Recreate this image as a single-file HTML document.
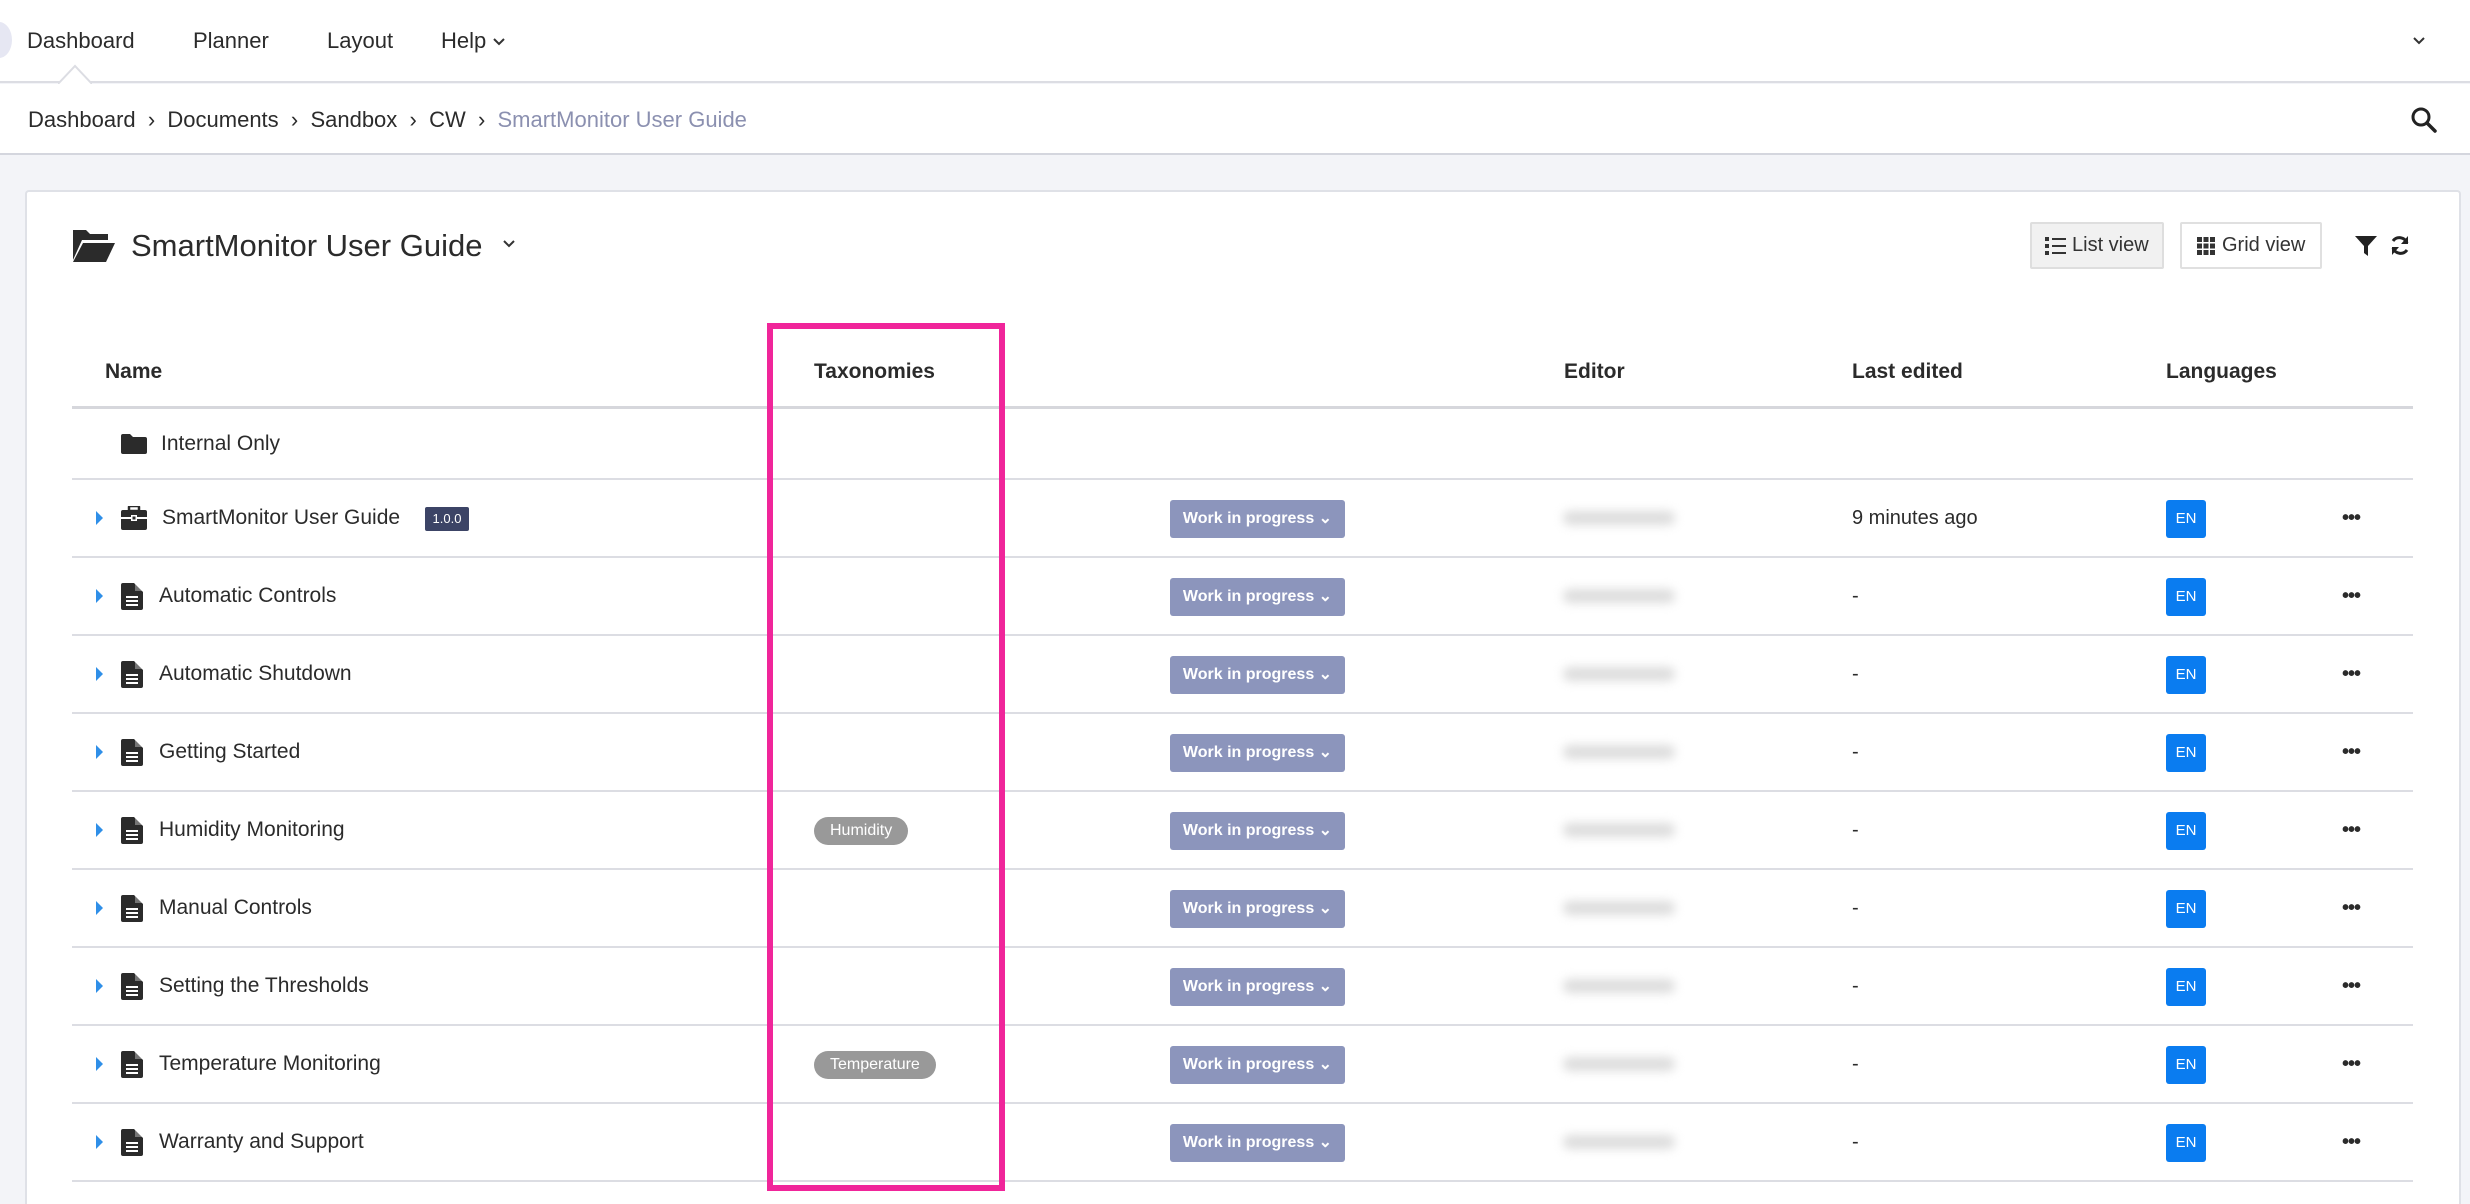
<!DOCTYPE html>
<html style="width:2470px;height:1204px;overflow:hidden"><head><meta charset="utf-8"><style>
*{box-sizing:border-box;margin:0;padding:0}
body{width:2470px;height:1204px;overflow:hidden;background:#f3f4f8;font-family:"Liberation Sans",sans-serif;color:#2b2b2b;position:relative}
.a{position:absolute}
.top{left:0;top:0;width:2470px;height:83px;background:#fff;border-bottom:2px solid #dcdde3}
.crumb{left:0;top:84px;width:2470px;height:71px;background:#fff;border-bottom:2px solid #d4d6de}
.nav{top:28px;font-size:22px;color:#2b2b2b}
.card{left:25px;top:190px;width:2436px;height:1014px;background:#fff;border:2px solid #dfe1e7;border-bottom:none;border-radius:4px 4px 0 0}
.th{top:360px;font-size:21px;font-weight:bold;color:#2b2b2b}
.line{left:72px;width:2341px;height:2px;background:#dcdde3}
.name{font-size:21px;color:#2b2b2b}
.wip{left:1170px;width:175px;height:38px;background:#8c95bc;border-radius:3px;color:#fff;font-size:16px;font-weight:bold;line-height:38px;text-align:center}
.ed{left:1563px;width:112px;height:14px;background:#dcdcdc;border-radius:7px;filter:blur(5px)}
.en{left:2166px;width:40px;height:38px;background:#0a7cf0;border-radius:3px;color:#fff;font-size:15px;line-height:38px;text-align:center}
.dots{left:2342px;font-size:20px;font-weight:bold;letter-spacing:-1px}
.tri{left:96px;width:0;height:0;border-left:7px solid #2f8fe8;border-top:7px solid transparent;border-bottom:7px solid transparent}
.pill{left:814px;height:28px;background:#999;border-radius:14px;color:#fff;font-size:16px;line-height:28px;padding:0 16px}
.le{left:1852px;font-size:20px}
</style></head><body>
<div class="a top"></div>
<div class="a" style="left:-14px;top:22px;width:26px;height:36px;border-radius:50%;background:#e6e7f3"></div>
<div class="a nav" style="left:27px">Dashboard</div>
<div class="a nav" style="left:193px">Planner</div>
<div class="a nav" style="left:327px">Layout</div>
<div class="a nav" style="left:441px">Help</div>
<svg class="a" style="left:493px;top:38px" width="12" height="8"><path d="M1 1 L6 6 L11 1" fill="none" stroke="#333" stroke-width="2"/></svg>
<svg class="a" style="left:58px;top:64px" width="34" height="21"><path d="M0 20 L17 2 L34 20" fill="#fff" stroke="#dcdde3" stroke-width="2"/></svg>
<svg class="a" style="left:2412px;top:36px" width="14" height="10"><path d="M2 2 L7 7 L12 2" fill="none" stroke="#333" stroke-width="2"/></svg>
<div class="a crumb"></div>
<div class="a" style="left:28px;top:107px;font-size:22px;color:#2b2b2b">Dashboard &nbsp;›&nbsp; Documents &nbsp;›&nbsp; Sandbox &nbsp;›&nbsp; CW &nbsp;›&nbsp; <span style="color:#8b90b0">SmartMonitor User Guide</span></div>
<svg class="a" style="left:2410px;top:106px" width="28" height="28"><circle cx="11" cy="11" r="8" fill="none" stroke="#222" stroke-width="3"/><path d="M17 17 L25 25" stroke="#222" stroke-width="3.5" stroke-linecap="round"/></svg>
<div class="a card"></div>
<svg class="a" style="left:72px;top:228px" width="44" height="36"><path d="M1 2 H14 L18 6 H36 V12 H10 L1 32 Z" fill="#2b2b2b"/><path d="M11 15 H43 L34 34 H1 Z" fill="#2b2b2b"/></svg>
<div class="a" style="left:131px;top:228px;font-size:31px;color:#2b2b2b">SmartMonitor User Guide</div>
<svg class="a" style="left:503px;top:240px" width="12" height="8"><path d="M1 1 L6 6 L11 1" fill="none" stroke="#333" stroke-width="2"/></svg>
<div class="a" style="left:2030px;top:222px;width:134px;height:47px;background:#f1f1f1;border:2px solid #dedede;border-radius:2px"></div>
<svg class="a" style="left:2045px;top:237px" width="22" height="18"><rect x="0" y="0" width="4" height="4" fill="#333"/><rect x="0" y="7" width="4" height="4" fill="#333"/><rect x="0" y="14" width="4" height="4" fill="#333"/><rect x="7" y="1" width="14" height="2" fill="#333"/><rect x="7" y="8" width="14" height="2" fill="#333"/><rect x="7" y="15" width="14" height="2" fill="#333"/></svg>
<div class="a" style="left:2072px;top:234px;font-size:20px;color:#333">List view</div>
<div class="a" style="left:2180px;top:222px;width:142px;height:47px;background:#fff;border:2px solid #e0e0e0;border-radius:2px"></div>
<svg class="a" style="left:2197px;top:237px" width="18" height="18"><g fill="#333"><rect x="0" y="0" width="5" height="5"/><rect x="6.5" y="0" width="5" height="5"/><rect x="13" y="0" width="5" height="5"/><rect x="0" y="6.5" width="5" height="5"/><rect x="6.5" y="6.5" width="5" height="5"/><rect x="13" y="6.5" width="5" height="5"/><rect x="0" y="13" width="5" height="5"/><rect x="6.5" y="13" width="5" height="5"/><rect x="13" y="13" width="5" height="5"/></g></svg>
<div class="a" style="left:2222px;top:234px;font-size:20px;color:#333">Grid view</div>
<svg class="a" style="left:2355px;top:236px" width="22" height="20"><path d="M0 0 H22 L13 10 V20 L9 17 V10 Z" fill="#222"/></svg>
<svg class="a" style="left:2390px;top:235px" width="20" height="21"><path d="M17 8 A8 8 0 0 0 3 6" fill="none" stroke="#222" stroke-width="3"/><path d="M3 13 A8 8 0 0 0 17 15" fill="none" stroke="#222" stroke-width="3"/><path d="M18 1 V9 H11 Z" fill="#222"/><path d="M2 20 V12 H9 Z" fill="#222"/></svg>
<div class="a th" style="left:105px">Name</div>
<div class="a th" style="left:814px">Taxonomies</div>
<div class="a th" style="left:1564px">Editor</div>
<div class="a th" style="left:1852px">Last edited</div>
<div class="a th" style="left:2166px">Languages</div>
<div class="a line" style="top:406px;height:3px;background:#d6d7dc"></div>
<svg class="a" style="left:121px;top:434px" width="26" height="20"><path d="M0 2 Q0 0 2 0 H9 L12 3 H24 Q26 3 26 5 V18 Q26 20 24 20 H2 Q0 20 0 18 Z" fill="#2b2b2b"/></svg>
<div class="a name" style="left:161px;top:432px">Internal Only</div>
<div class="a line" style="top:478px"></div>

<div id="rows"></div>
<script>
var rows=[["SmartMonitor User Guide","","9 minutes ago",1],["Automatic Controls"],["Automatic Shutdown"],["Getting Started"],["Humidity Monitoring","Humidity"],["Manual Controls"],["Setting the Thresholds"],["Temperature Monitoring","Temperature"],["Warranty and Support"]];
var h="";var top0=479,rh=78;
rows.forEach(function(r,i){var y=top0+i*rh,c=y+39;
h+='<div class="a tri" style="top:'+(c-7)+'px"></div>';
if(r[3]){h+='<svg class="a" style="left:121px;top:'+(c-12)+'px" width="26" height="24"><rect x="8" y="0" width="10" height="5" rx="1" fill="none" stroke="#2b2b2b" stroke-width="2.5"/><rect x="0" y="4" width="26" height="20" rx="2" fill="#2b2b2b"/><rect x="0" y="11" width="26" height="2" fill="#fff"/><rect x="10" y="9" width="6" height="6" fill="#fff"/><rect x="11.5" y="10.5" width="3" height="3" fill="#2b2b2b"/></svg>';
h+='<div class="a name" style="left:162px;top:'+(c-12)+'px">'+r[0]+'</div>';
h+='<div class="a" style="left:425px;top:'+(c-11)+'px;width:44px;height:24px;background:#3c4466;border-radius:2px;color:#fff;font-size:13px;line-height:24px;text-align:center">1.0.0</div>';}
else{h+='<svg class="a" style="left:121px;top:'+(c-13)+'px" width="22" height="27"><path d="M0 2 Q0 0 2 0 H13 L22 9 V25 Q22 27 20 27 H2 Q0 27 0 25 Z" fill="#2b2b2b"/><path d="M14 0 L22 8 H14 Z" fill="#fff" opacity=".35"/><rect x="5" y="13" width="12" height="2" fill="#fff"/><rect x="5" y="17" width="12" height="2" fill="#fff"/><rect x="5" y="21" width="12" height="2" fill="#fff"/></svg>';
h+='<div class="a name" style="left:159px;top:'+(c-12)+'px">'+r[0]+'</div>';}
if(r[1])h+='<div class="a pill" style="top:'+(c-13)+'px">'+r[1]+'</div>';
h+='<div class="a wip" style="top:'+(c-18)+'px">Work in progress &#8964;</div>';
h+='<div class="a ed" style="top:'+(c-7)+'px"></div>';
h+='<div class="a le" style="top:'+(c-11)+'px">'+(r[2]||"-")+'</div>';
h+='<div class="a en" style="top:'+(c-18)+'px">EN</div>';
h+='<div class="a dots" style="top:'+(c-11)+'px">•••</div>';
h+='<div class="a line" style="top:'+(y+rh-1)+'px"></div>';});
document.getElementById("rows").innerHTML=h;
</script>
<div class="a" style="left:767px;top:323px;width:238px;height:868px;border:6px solid #f0259a"></div>
</body></html>
